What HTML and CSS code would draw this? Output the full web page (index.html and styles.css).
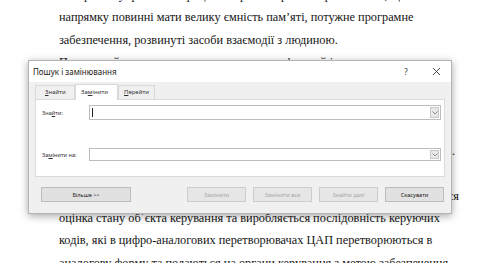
FILE: index.html
```html
<!DOCTYPE html>
<html lang="uk">
<head>
  <meta charset="UTF-8">
  <title>Пошук і замінювання</title>
  <link rel="stylesheet" href="styles.css">
</head>
<body>
  <section class="doc">
    <div class="line">У мережах управління процесами різного рівня і призначення, що</div>
    <div class="line top">напрямку повинні мати велику ємність пам’яті, потужне програмне</div>
    <div class="line">забезпечення, розвинуті засоби взаємодії з людиною.</div>
    <div class="line">Подальший розвиток систем керування пов’язаний із</div>
    <div class="line">впровадженням мікропроцесорних засобів обробки даних у</div>
    <div class="line">контури керування технологічними об’єктами, при цьому</div>
    <div class="line">вимірювальна інформація надходить від давачів до</div>
    <div class="line dot">обчислювального пристрою через перетворювачі АЦП.</div>
    <div class="line">Сигнали з давачів обробляються за алгоритмом, після</div>
    <div class="line wide">чого в обчислювальному пристрої здійснюється</div>
    <div class="line">оцінка стану об΄єкта керування та виробляється послідовність керуючих</div>
    <div class="line">кодів, які в цифро-аналогових перетворювачах ЦАП перетворюються в</div>
    <div class="line">аналогову форму та подаються на органи керування з метою забезпечення</div>
  </section>

  <div class="dialog">
    <div class="titlebar">
      <span class="title">Пошук і замінювання</span>
      <span class="tb-btn help">?</span>
      <span class="tb-btn close">
        <svg width="9" height="9" viewBox="0 0 9 9"><path d="M1 1L8 8M8 1L1 8" stroke="#333" stroke-width="0.9" fill="none"/></svg>
      </span>
    </div>

    <div class="tabs">
      <span class="tab"><u>З</u>найти</span>
      <span class="tab active">За<u>м</u>інити</span>
      <span class="tab"><u>П</u>ерейти</span>
    </div>

    <div class="panel">
      <div class="field">
        <label>Зна<u>й</u>ти:</label>
        <div class="combo"><span class="caret"></span><span class="drop"><svg width="6" height="4" viewBox="0 0 6 4"><path d="M0.5 0.5L3 3L5.5 0.5" stroke="#777" stroke-width="0.8" fill="none"/></svg></span></div>
      </div>
      <div class="field second">
        <label>За<u>м</u>інити на:</label>
        <div class="combo"><span class="drop"><svg width="6" height="4" viewBox="0 0 6 4"><path d="M0.5 0.5L3 3L5.5 0.5" stroke="#777" stroke-width="0.8" fill="none"/></svg></span></div>
      </div>
    </div>

    <div class="buttons">
      <button class="btn more">Більше &gt;&gt;</button>
      <div class="right">
        <button class="btn disabled">Замінити</button>
        <button class="btn disabled">Замінити все</button>
        <button class="btn disabled">Знайти далі</button>
        <button class="btn">Скасувати</button>
      </div>
    </div>
  </div>
</body>
</html>
```

FILE: styles.css
```css
* { box-sizing: border-box; margin: 0; padding: 0; }
html { overflow: hidden; }
body {
  width: 490px;
  height: 263px;
  overflow: hidden;
  position: relative;
  background: #fff;
  font-family: "Liberation Serif", "Times New Roman", serif;
  color: #161616;
}

/* document behind the dialog */
.doc {
  margin-top: -16px;
  padding-left: 59px;
  height: 279px;
  overflow: hidden;
}
.doc .line {
  height: 22.3px;
  line-height: 22.3px;
  font-size: 12.3px;
  white-space: nowrap;
}
.doc .line.top,
.doc .line.dot,
.doc .line.wide {
  text-align: justify;
  text-align-last: justify;
}
.doc .line.top { width: 353px; }
.doc .line.dot { width: 396px; }
.doc .line.wide { width: 400px; }

/* dialog window */
.dialog {
  position: absolute;
  left: 28px;
  top: 60px;
  width: 424px;
  height: 154px;
  background: #f0f0f0;
  border: 1px solid #b4b4b4;
  box-shadow: 0 2px 8px rgba(0,0,0,0.35);
  font-family: "Noto Sans", "Open Sans", sans-serif;
  color: #222;
  display: flex;
  flex-direction: column;
}
.titlebar {
  height: 21px;
  background: #fff;
  display: flex;
  align-items: center;
  padding-left: 4px;
}
.title {
  font-size: 8px;
  flex: 1;
  color: #1a1a1a;
}
.tb-btn {
  width: 30px;
  height: 21px;
  display: flex;
  align-items: center;
  justify-content: center;
  font-size: 8px;
  color: #333;
}

.tabs {
  display: flex;
  padding: 2px 0 0 6px;
  height: 17px;
  align-items: flex-end;
}
.tab {
  height: 14px;
  line-height: 13px;
  font-size: 6px;
  padding: 0 9px;
  border: 1px solid #d9d9d9;
  border-bottom: none;
  background: #f0f0f0;
  color: #333;
}
.tab:first-child { width: 40px; text-align: center; }
.tab.active {
  height: 16px;
  line-height: 15px;
  background: #fff;
  width: 43px;
  padding: 0 5px;
  margin-bottom: -1px;
  position: relative;
}
.tab:last-child { width: 37px; padding: 0 5px; }

.panel {
  margin: 0 6px;
  height: 78px;
  background: #fff;
  border: 1px solid #dadada;
  padding: 5px 3px 0 6px;
}
.field {
  display: flex;
  align-items: center;
  height: 15px;
}
.field.second { margin-top: 28px; height: 13px; }
.field label {
  width: 47px;
  font-size: 5.6px;
  color: #333;
}
.combo {
  flex: 1;
  height: 100%;
  border: 1px solid #bdbdbd;
  background: #fff;
  display: flex;
  align-items: center;
  padding-left: 2px;
}
.caret {
  width: 1px;
  height: 9px;
  background: #222;
}
.drop {
  margin-left: auto;
  width: 9px;
  height: calc(100% - 2px);
  margin-right: 1px;
  border: 1px solid #c8c8c8;
  background: #e8e8e8;
  display: flex;
  align-items: center;
  justify-content: center;
}

.buttons {
  display: flex;
  padding: 10px 7px 0 12px;
}
.btn {
  height: 15px;
  width: 59px;
  font-family: "Noto Sans", "Open Sans", sans-serif;
  font-size: 5.6px;
  border: 1px solid #bcbcbc;
  background: #e1e1e1;
  color: #222;
}
.btn.more { width: 90px; }
.btn.disabled {
  color: #a6a6a6;
  background: #e6e6e6;
  border-color: #cdcdcd;
}
.right {
  margin-left: auto;
  display: flex;
  gap: 7px;
}
```
